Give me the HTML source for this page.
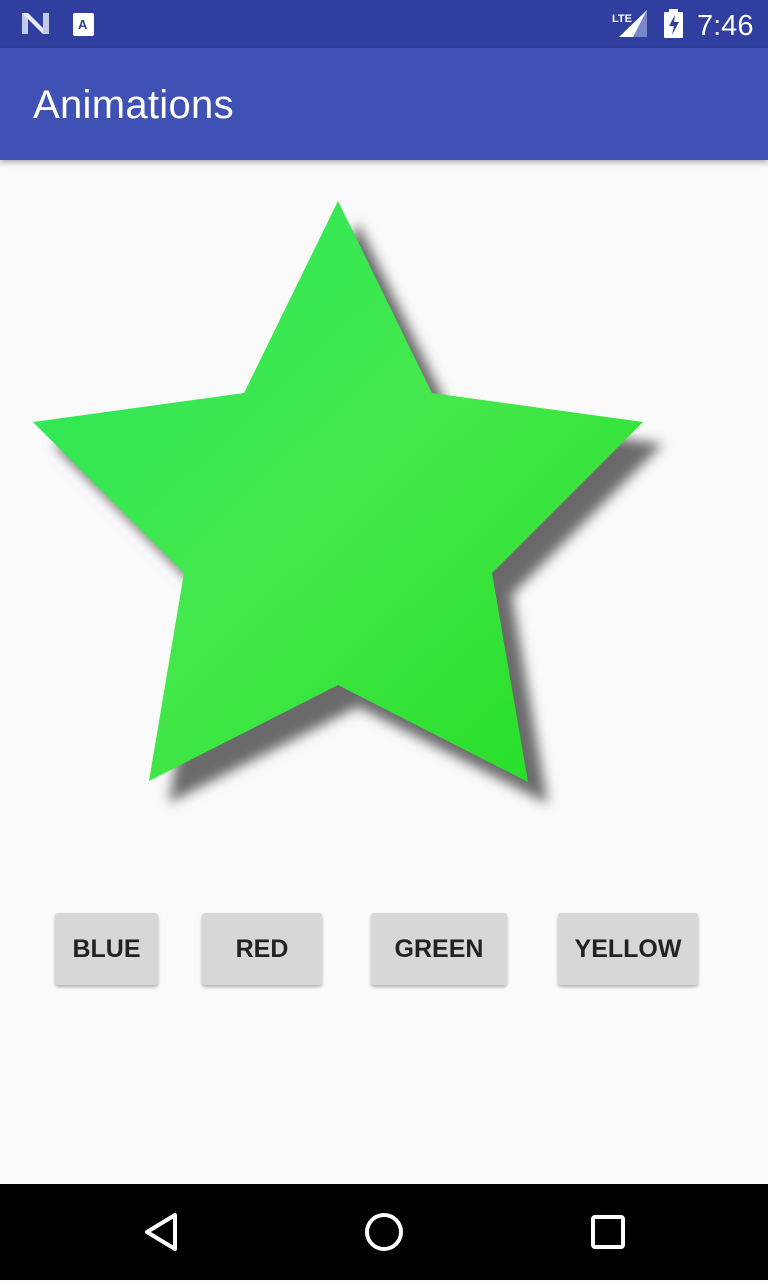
<!DOCTYPE html>
<html><head><style>
body{margin:0;width:768px;height:1280px;background:#fafafa;font-family:"Liberation Sans",sans-serif;position:relative;overflow:hidden}
.sb{position:absolute;top:0;left:0;width:768px;height:48px;background:#303f9f;color:#fff}
.ab{position:absolute;top:48px;left:0;width:768px;height:112px;background:#3f51b5;box-shadow:0 2px 6px rgba(0,0,0,.35)}
.ab span{position:absolute;left:33px;top:35px;font-size:40px;letter-spacing:0.3px;color:#fff}
.btn{position:absolute;top:913px;height:72px;background:#d6d7d7;border-radius:3px;box-shadow:0 2px 3px rgba(0,0,0,.3);font-size:25px;font-weight:bold;color:#222;display:flex;align-items:center;justify-content:center}
.nav{position:absolute;top:1184px;left:0;width:768px;height:96px;background:#000}
</style></head><body>
<div class="sb">
<svg width="768" height="48" style="position:absolute;left:0;top:0">
<polygon points="22,13 28,13 28,34 22,34" fill="#c5cae9"/>
<polygon points="22,13 28,13 49,34 43,34" fill="#e8eaf6"/>
<polygon points="43,13 49,13 49,34 43,34" fill="#c5cae9"/>
<rect x="73" y="13" width="21" height="23" rx="2" fill="#fff"/>
<text x="78" y="29" font-size="13" font-weight="bold" fill="#303f9f" font-family="Liberation Sans">A</text>
<polygon points="619,37 647,10 647,37" fill="#fff"/>
<polygon points="633,37 647,10 647,37" fill="#7986cb"/>
<text x="612" y="22" font-size="11" font-weight="bold" fill="#fff" font-family="Liberation Sans">LTE</text>
<rect x="664" y="12" width="19" height="26" rx="1" fill="#fff"/>
<rect x="669" y="9" width="9" height="4" fill="#fff"/>
<polygon points="675,15 669,26 674,26 672,35 679,22 674,22" fill="#303f9f"/>
<text x="697" y="35" font-size="29" fill="#fff" font-family="Liberation Sans">7:46</text>
</svg>
</div>
<div class="ab"><span>Animations</span></div>
<svg width="768" height="900" style="position:absolute;left:0;top:0">
<defs>
<filter id="b" x="-20%" y="-20%" width="140%" height="140%"><feGaussianBlur stdDeviation="6"/></filter>
<linearGradient id="g" x1="0" y1="0" x2="1" y2="1">
<stop offset="0" stop-color="#26e85a"/><stop offset="0.5" stop-color="#45e84c"/><stop offset="1" stop-color="#22dd22"/></linearGradient>
</defs>
<g transform="translate(20,22)" filter="url(#b)">
<polygon points="338,201 432,393 643,422 492,573 528,782 338,685 149,781 184,573 33,422 244,393" fill="#6a6a6a"/>
</g>
<polygon points="338,201 432,393 643,422 492,573 528,782 338,685 149,781 184,573 33,422 244,393" fill="url(#g)"/>
</svg>
<div class="btn" style="left:55px;width:103px">BLUE</div>
<div class="btn" style="left:202px;width:120px">RED</div>
<div class="btn" style="left:371px;width:136px">GREEN</div>
<div class="btn" style="left:558px;width:140px">YELLOW</div>
<div class="nav">
<svg width="768" height="96">
<polygon points="175,31 175,65 147,48" fill="none" stroke="#fff" stroke-width="4" stroke-linejoin="round"/>
<circle cx="384" cy="48" r="17" fill="none" stroke="#fff" stroke-width="4"/>
<rect x="593" y="33" width="30" height="30" rx="2" fill="none" stroke="#fff" stroke-width="4"/>
</svg>
</div>
</body></html>
